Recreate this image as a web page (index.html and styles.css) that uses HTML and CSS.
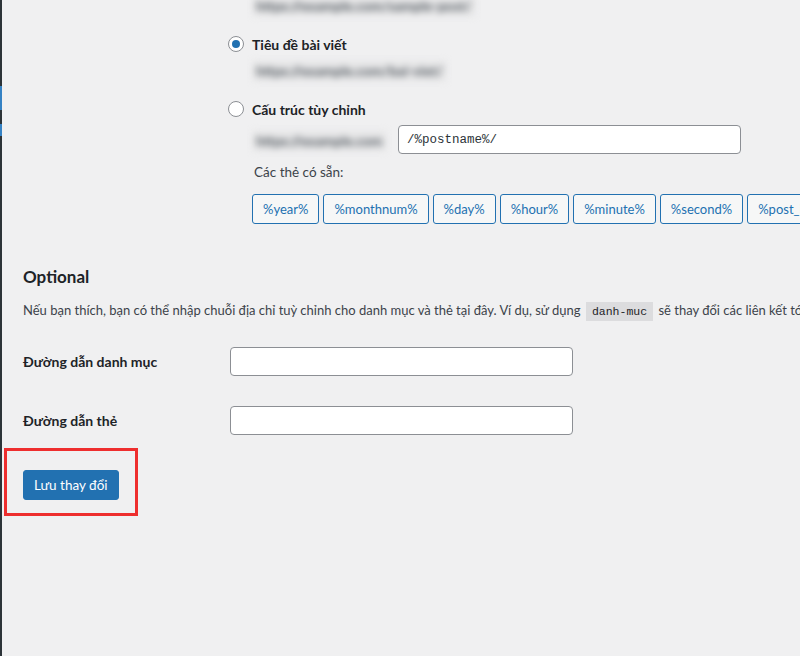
FILE: index.html
```html
<!DOCTYPE html>
<html lang="vi">
<head>
    <meta charset="UTF-8">
    <meta name="viewport" content="width=device-width, initial-scale=1.0">
    <title>Cài đặt đường dẫn tĩnh</title>
    <link rel="stylesheet" href="styles.css">
</head>
<body>
<div class="admin-bar-edge">
    <span class="edge-mark edge-mark-a"></span>
    <span class="edge-mark edge-mark-b"></span>
</div>
<div class="wrap">
    <div class="permalink-options">
        <div class="blur-line"><code>https://example.com/sample-post/</code></div>

        <label class="option">
            <span class="radio checked"></span>
            <span class="option-label">Tiêu đề bài viết</span>
        </label>
        <div class="blur-line"><code>https://example.com/bai-viet/</code></div>

        <label class="option">
            <span class="radio"></span>
            <span class="option-label">Cấu trúc tùy chỉnh</span>
        </label>
        <div class="custom-row">
            <span class="blur-line blur-inline"><code>https://example.com</code></span>
            <input class="text-input code-input" type="text" value="/%postname%/">
        </div>

        <div class="tags-title">Các thẻ có sẵn:</div>
        <div class="tags">
            <button class="tag">%year%</button>
            <button class="tag">%monthnum%</button>
            <button class="tag">%day%</button>
            <button class="tag">%hour%</button>
            <button class="tag">%minute%</button>
            <button class="tag">%second%</button>
            <button class="tag">%post_id%</button>
            <button class="tag">%postname%</button>
        </div>
    </div>

    <h2 class="section-title">Optional</h2>
    <p class="section-desc">Nếu bạn thích, bạn có thể nhập chuỗi địa chỉ tuỳ chỉnh cho danh mục và thẻ tại đây. Ví dụ, sử dụng <code>danh-muc</code> sẽ thay đổi các liên kết tới danh mục</p>

    <div class="field-row">
        <label class="field-label">Đường dẫn danh mục</label>
        <input class="text-input" type="text">
    </div>
    <div class="field-row field-row-second">
        <label class="field-label">Đường dẫn thẻ</label>
        <input class="text-input" type="text">
    </div>

    <div class="submit-box">
        <button class="button-primary">Lưu thay đổi</button>
    </div>
</div>
</body>
</html>
```

FILE: styles.css
```css
* {
    margin: 0;
    padding: 0;
    box-sizing: border-box;
}

body {
    background: #f0f0f1;
    font-family: Lato, 'Noto Sans', sans-serif;
    color: #1d2327;
    height: 656px;
    overflow: hidden;
    display: flex;
}

.admin-bar-edge {
    position: relative;
    width: 2px;
    flex-shrink: 0;
    background: #2c3338;
}

.edge-mark {
    position: absolute;
    left: 0;
    width: 2px;
    background: #3582c4;
}

.edge-mark-a {
    top: 86px;
    height: 24px;
}

.edge-mark-b {
    top: 124px;
    height: 12px;
}

.wrap {
    flex: 1;
    padding-left: 21px;
    min-width: 0;
}

.permalink-options {
    margin-left: 207px;
    margin-top: -5px;
}

/* blurred example urls */
.blur-line {
    display: block;
    height: 20px;
    padding-left: 23px;
}

.blur-line code {
    display: inline-block;
    height: 20px;
    line-height: 20px;
    padding: 0 3px;
    background: #e6e6e7;
    font-family: Lato, 'Noto Sans', sans-serif;
    font-size: 14px;
    font-weight: 700;
    color: #50575e;
    white-space: nowrap;
    filter: blur(3.5px);
}

.blur-line + .option {
    margin-top: 19px;
}

.option + .blur-line {
    margin-top: 6px;
}

.option {
    display: flex;
    align-items: center;
    gap: 8px;
    height: 20px;
    margin-left: -2px;
    font-size: 14px;
    font-weight: 700;
    color: #1d2327;
}

.radio {
    width: 16px;
    height: 16px;
    border: 1px solid #8c8f94;
    border-radius: 50%;
    background: #fff;
    display: flex;
    align-items: center;
    justify-content: center;
}

.radio.checked::after {
    content: "";
    width: 8px;
    height: 8px;
    border-radius: 50%;
    background: #2271b1;
}

.custom-row {
    display: flex;
    align-items: center;
    gap: 8px;
    margin-top: 6px;
    height: 29px;
}

.blur-inline {
    width: 160px;
    flex-shrink: 0;
}

.text-input {
    height: 29px;
    background: #fff;
    border: 1px solid #8c8f94;
    border-radius: 4px;
    padding: 0 8px;
    font-size: 14px;
    color: #2c3338;
    outline: none;
}

.code-input {
    width: 343px;
    font-family: 'Liberation Mono', monospace;
    font-size: 12.5px;
}

.tags-title {
    margin-top: 8px;
    height: 20px;
    line-height: 20px;
    padding-left: 24px;
    font-size: 13.5px;
    color: #3c434a;
}

.tags {
    display: flex;
    gap: 4px;
    margin-top: 12px;
    padding-left: 22px;
    white-space: nowrap;
}

.tag {
    flex-shrink: 0;
    height: 30px;
    padding: 0 10px;
    border: 1px solid #2271b1;
    border-radius: 3px;
    background: #f6f7f7;
    color: #2271b1;
    font-family: Lato, 'Noto Sans', sans-serif;
    font-size: 13px;
}

.section-title {
    margin-top: 41px;
    height: 24px;
    line-height: 24px;
    font-size: 17px;
    font-weight: 700;
    color: #1d2327;
}

.section-desc {
    margin-top: 11px;
    height: 20px;
    line-height: 20px;
    font-size: 13px;
    color: #3c434a;
    white-space: nowrap;
}

.section-desc code {
    font-family: 'Liberation Mono', monospace;
    font-size: 11.5px;
    background: #dcdcde;
    padding: 3px 6px;
    margin: 0 2px;
    color: #1d2327;
}

.field-row {
    display: flex;
    align-items: center;
    margin-top: 27px;
}

.field-row-second {
    margin-top: 30px;
}

.field-label {
    width: 207px;
    font-size: 14px;
    font-weight: 700;
    color: #1d2327;
}

.field-row .text-input {
    width: 343px;
}

.submit-box {
    width: 134px;
    height: 68px;
    margin-top: 13px;
    margin-left: -19px;
    border: 3px solid #ee2e2e;
    padding: 19px 0 0 16px;
}

.button-primary {
    height: 30px;
    padding: 0 10px;
    border: 1px solid #2271b1;
    border-radius: 3px;
    background: #2271b1;
    color: #fff;
    font-family: Lato, 'Noto Sans', sans-serif;
    font-size: 13.5px;
}
```
